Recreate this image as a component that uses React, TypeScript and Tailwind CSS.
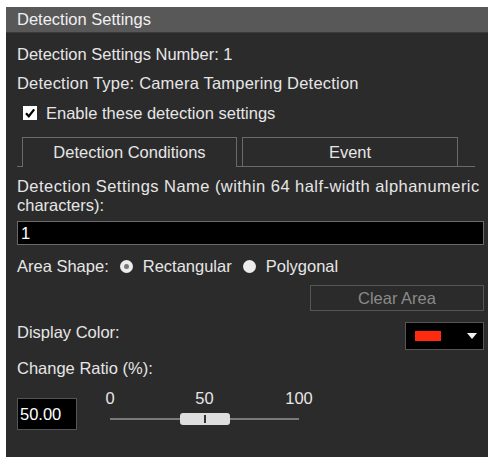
import React from 'react'

const font = { fontFamily: '"Liberation Sans", Arial, sans-serif' }

function CheckBox() {
  return (
    <span className="w-[14px] h-[14px] bg-white flex items-center justify-center shrink-0">
      <svg width="12" height="12" viewBox="0 0 12 12">
        <path d="M2 6.2 L4.8 9.2 L10.2 2.4" stroke="#000" strokeWidth="2.2" fill="none" />
      </svg>
    </span>
  )
}

function Radio({ checked }: { checked: boolean }) {
  return (
    <span className="w-[13px] h-[13px] rounded-full bg-[#ececec] flex items-center justify-center shrink-0">
      {checked && <span className="w-[5px] h-[5px] rounded-full bg-[#777]" />}
    </span>
  )
}

export default function App() {
  return (
    <div className="w-[490px] h-[459px] bg-white pt-[7px] pl-[6px] text-[16.5px] text-[#e6e6e6]" style={font}>
      <div className="w-[482px] h-[450px] bg-[#2b2b2b] flex flex-col">
        {/* Header */}
        <div className="h-[26px] bg-[#585858] border-b border-[#3a3a3a] flex items-center pl-[11px] text-[#f0f0f0]">
          Detection Settings
        </div>

        <div className="flex flex-col pl-[11px] pr-[4px]">
          <div className="h-[29px] mt-[7px] flex items-center">Detection Settings Number: 1</div>
          <div className="h-[29px] flex items-center tracking-[0.2px]">Detection Type: Camera Tampering Detection</div>
          <div className="h-[30px] flex items-center gap-[9px] pl-[6px]">
            <CheckBox />
            <span>Enable these detection settings</span>
          </div>

          {/* Tabs */}
          <div className="mt-[9px] w-[458px] h-[30px] flex border-b border-[#6a6a6a] pl-[5px]">
            <div className="w-[215px] h-[30px] -mb-px bg-[#2b2b2b] border-l border-t border-r border-[#6a6a6a] flex items-center justify-center">
              Detection Conditions
            </div>
            <div className="ml-[5px] w-[216px] h-[30px] border-l border-t border-r border-[#6a6a6a] flex items-center justify-center">
              Event
            </div>
          </div>

          <div className="mt-[10px] leading-[19px] flex flex-col">
            <span className="whitespace-nowrap tracking-[0.45px]">Detection Settings Name (within 64 half-width alphanumeric</span>
            <span>characters):</span>
          </div>
          <div className="mt-[6px] w-[467px] h-[24px] bg-black border border-[#6a6a6a] flex items-center pl-[3px] text-white">
            1
          </div>

          <div className="mt-[9px] h-[24px] flex items-center">
            <span>Area Shape:</span>
            <span className="ml-[11px]"><Radio checked /></span>
            <span className="ml-[10px]">Rectangular</span>
            <span className="ml-[11px]"><Radio checked={false} /></span>
            <span className="ml-[10px]">Polygonal</span>
          </div>

          <div className="mt-[7px] flex justify-end">
            <div className="w-[174px] h-[26px] border border-[#555] flex items-center justify-center text-[#8a8a8a]">
              Clear Area
            </div>
          </div>

          <div className="mt-[11px] flex items-center justify-between h-[28px]">
            <span className="-mt-[8px]">Display Color:</span>
            <div className="w-[79px] h-[28px] bg-black border border-[#555] flex items-center pl-[9px] pr-[6px] justify-between">
              <span className="w-[26px] h-[10px] bg-[#ff2a10]" />
              <svg width="10" height="6" viewBox="0 0 10 6">
                <path d="M0 0 L10 0 L5 6 Z" fill="#f2f2f2" />
              </svg>
            </div>
          </div>

          <div className="mt-[8px] h-[20px] flex items-center">Change Ratio (%):</div>

          <div className="mt-[10px] flex items-end">
            <div className="w-[60px] h-[32px] bg-black border border-[#555] flex items-center pl-[2px] text-white">
              50.00
            </div>
            <div className="ml-[33px] w-[189px] flex flex-col">
              <div className="relative h-[20px] -mt-[2px]">
                <span className="absolute left-0 -translate-x-1/2">0</span>
                <span className="absolute left-1/2 -translate-x-1/2">50</span>
                <span className="absolute right-0 translate-x-1/2">100</span>
              </div>
              <div className="relative h-[22px] mt-[2px] flex items-center">
                <div className="w-full h-[2px] bg-[#7a7a7a]" />
                <div className="absolute left-[70px] top-[5px] w-[50px] h-[12px] rounded-[3px] bg-[#dedede] flex items-center justify-center">
                  <span className="w-[2px] h-[8px] bg-[#333]" />
                </div>
              </div>
            </div>
          </div>
        </div>
      </div>
    </div>
  )
}
